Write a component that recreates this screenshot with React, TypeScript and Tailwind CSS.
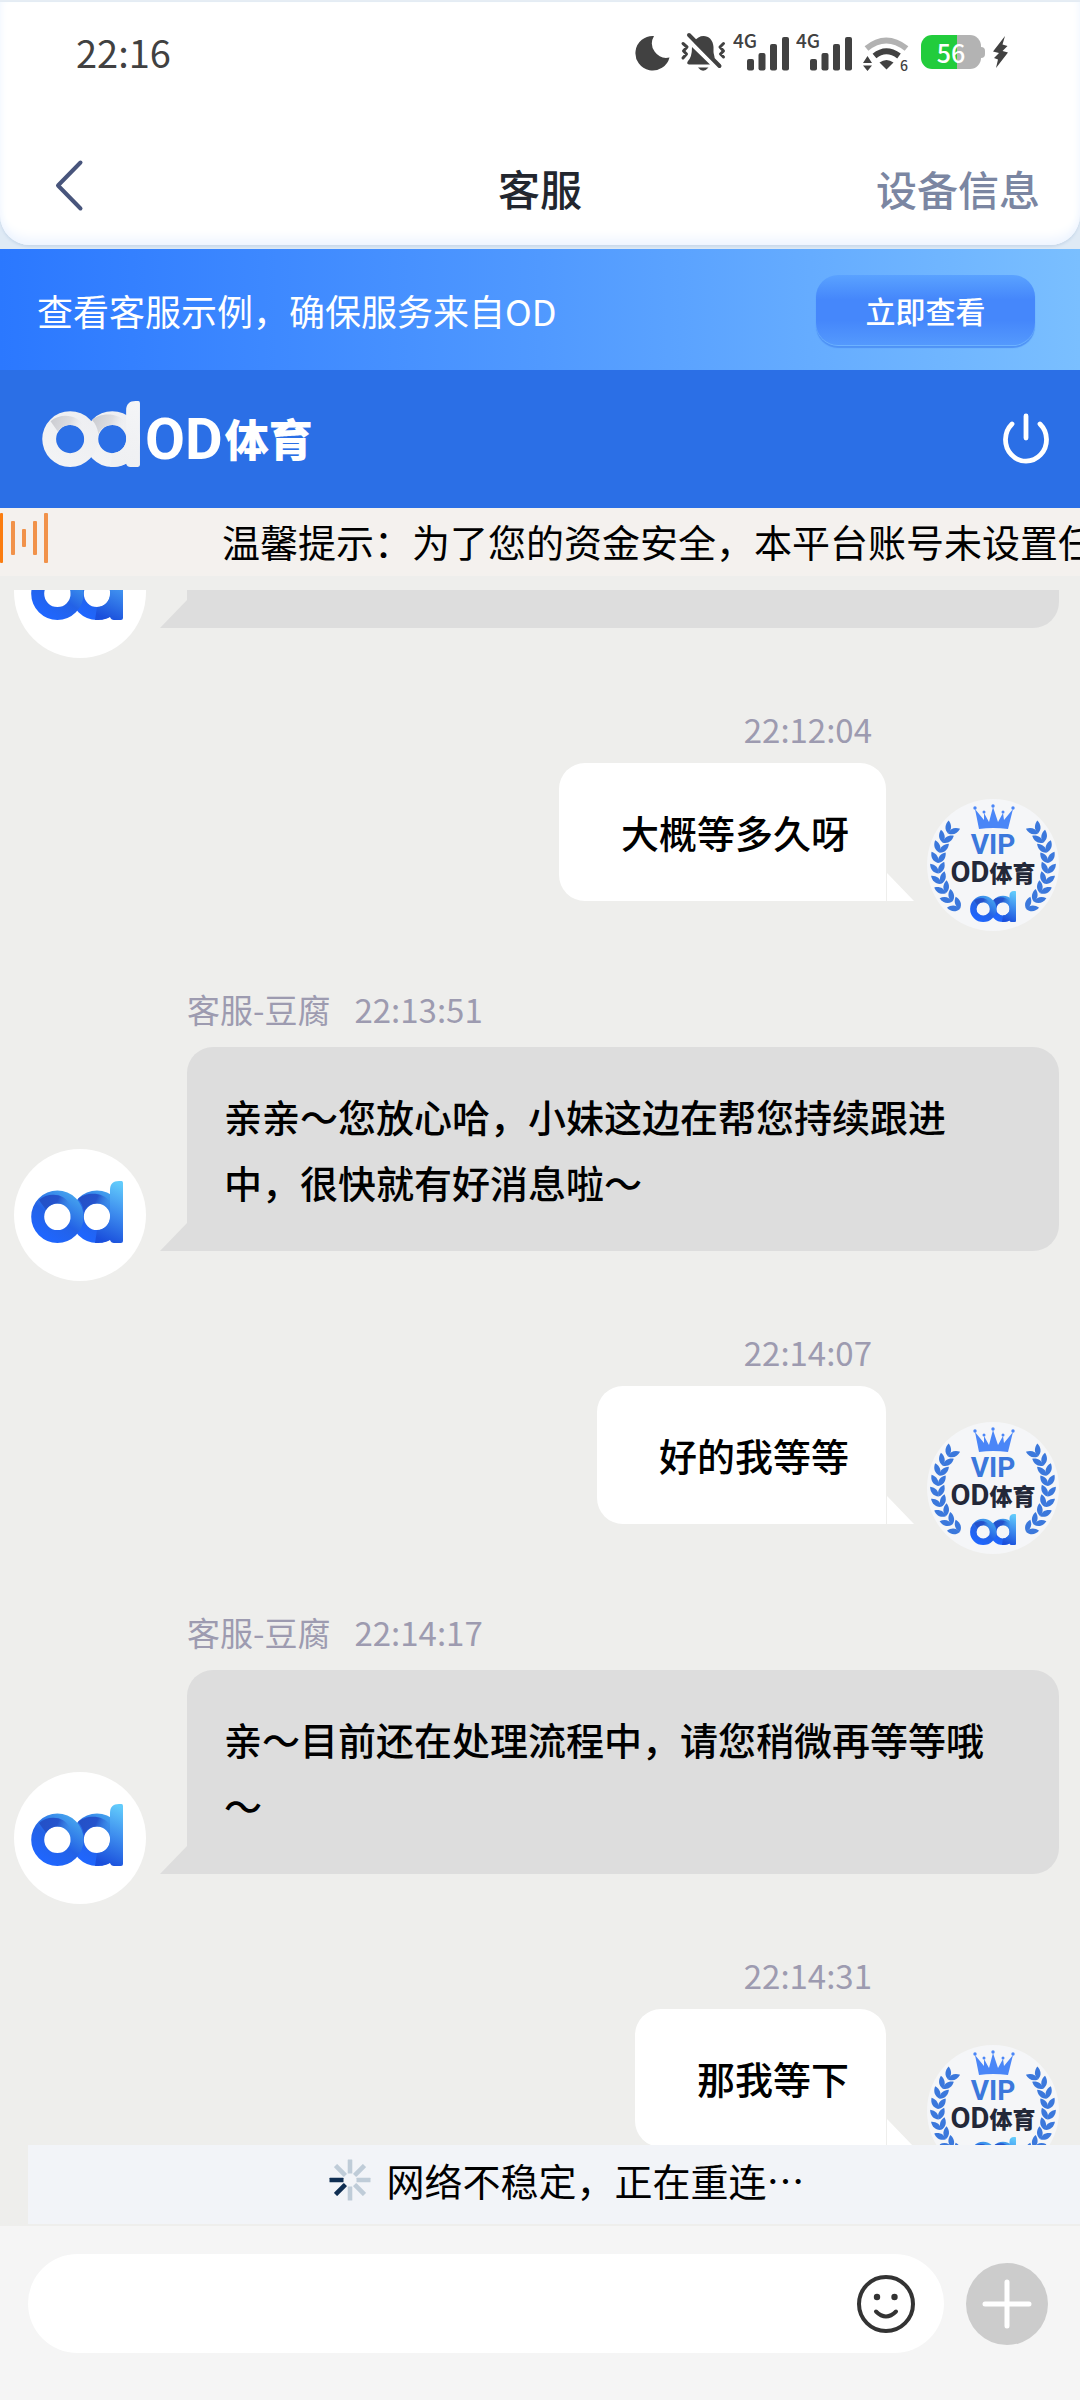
import React from 'react';

const FONT = "font-['Noto_Sans_CJK_SC',sans-serif]";

type LogoTone = 'blue' | 'white';

function OdLogo({ tone, className }: { tone: LogoTone; className: string }) {
  const blue = tone === 'blue';
  const id = React.useId();
  return (
    <svg viewBox="0 0 92 62" className={className} aria-hidden="true">
      <defs>
        <linearGradient id={id + 'a'} x1="0.3" y1="0.95" x2="0.85" y2="0.1">
          <stop offset="0" stopColor={blue ? '#1f66ff' : '#f2f3f5'} />
          <stop offset="0.45" stopColor={blue ? '#2362e6' : '#f0f1f3'} />
          <stop offset="1" stopColor={blue ? '#46a4ee' : '#eeeff2'} />
        </linearGradient>
        <linearGradient id={id + 'b'} x1="0" y1="0" x2="1" y2="0.3">
          <stop offset="0" stopColor={blue ? '#2350c6' : '#c9cacf'} />
          <stop offset="0.6" stopColor={blue ? '#2553cc' : '#dcdde1'} />
          <stop offset="1" stopColor={blue ? '#3a86e4' : '#f0f1f3'} stopOpacity="0.2" />
        </linearGradient>
        <linearGradient id={id + 'c'} x1="0.7" y1="0" x2="0.5" y2="1">
          <stop offset="0" stopColor={blue ? '#62cbfb' : '#f4f5f7'} />
          <stop offset="0.5" stopColor={blue ? '#3d8cee' : '#f1f2f4'} />
          <stop offset="1" stopColor={blue ? '#1a4fdc' : '#eff0f2'} />
        </linearGradient>
      </defs>
      <path
        fillRule="evenodd"
        fill={'url(#' + id + 'a)'}
        d="M66 9.6a26.2 26.2 0 1 0 0 52.4a26.2 26.2 0 0 0 0-52.4ZM66 22.6a13.2 13.2 0 1 1 0 26.4a13.2 13.2 0 0 1 0-26.4Z"
      />
      <path fill={'url(#' + id + 'b)'} d="M47 18C54 11 72 10 79 21V33C78 26 72 22.6 66 22.6C60 22.6 55 26 53 31C52 25 50 21 47 18Z" />
      <path
        fill={'url(#' + id + 'c)'}
        d="M79 9C79 3 82 0 88 0H90.5Q92 0 92 2V60Q92 62 90 62H83Q80 62 79 59C74 62 68 62 64 62L66 49C73 49 79 43 79 36Z"
      />
      <path
        fillRule="evenodd"
        fill={'url(#' + id + 'a)'}
        d="M26.4 9.6a26.2 26.2 0 1 0 0 52.4a26.2 26.2 0 0 0 0-52.4ZM26.4 22.6a13.2 13.2 0 1 1 0 26.4a13.2 13.2 0 0 1 0-26.4Z"
      />
      <path fill={'url(#' + id + 'b)'} d="M8 19C17 11 34 12 39 24L40 36C39 27 33 22.6 26.4 22.6C22 22.6 17 25 15 29C13 26 10 22 8 19Z" />
    </svg>
  );
}

const LEAF_STEPS = [55, 66, 77, 88, 99, 110, 121, 132, 143];

function Laurel() {
  return (
    <g fill="#3b78dc">
      {LEAF_STEPS.map((deg) => {
        const rad = (deg * Math.PI) / 180;
        const x = -55 * Math.sin(rad);
        const y = -55 * Math.cos(rad);
        return (
          <g key={deg} transform={`translate(${x} ${y}) rotate(${90 - deg})`}>
            <path transform="rotate(-32)" d="M0 0C-4-4-3.500-9 0-13C3.500-9 4-4 0 0Z" />
            <path transform="rotate(34)" d="M0 0C-4-4-3.500-9 0-13C3.500-9 4-4 0 0Z" />
          </g>
        );
      })}
    </g>
  );
}

function VipAvatar() {
  return (
    <div className="relative mb-[-30px] size-[132px] shrink-0 rounded-full bg-[#f5f6f8]">
      <svg viewBox="-66 -66 132 132" className="absolute inset-0 size-full" aria-hidden="true">
        <Laurel />
        <g transform="scale(-1 1)">
          <Laurel />
        </g>
        <g fill="#4a86f7">
          <path d="M-14-36L-18-56L-9-45L-9-52L-4-43L0-58L5-43L10-52L11-45L20-56L15-36Q0-38-14-36Z" />
          <circle cx="-18" cy="-57" r="1.7" />
          <circle cx="-9" cy="-53" r="1.5" />
          <circle cx="0" cy="-59" r="1.7" />
          <circle cx="10" cy="-53" r="1.5" />
          <circle cx="20" cy="-57" r="1.7" />
        </g>
      </svg>
      <div className="relative flex flex-col items-center pt-[32px]">
        <span className="font-['Roboto',sans-serif] text-[28px] leading-[28px] font-bold text-[#3b78dc]">VIP</span>
        <span className="flex items-center leading-[26px] text-[#232838]">
          <span className="font-['Roboto',sans-serif] text-[29px] font-bold">OD</span>
          <span className="text-[23px] font-black">体育</span>
        </span>
        <OdLogo tone="blue" className="mt-[6px] h-[31px] w-[46px]" />
      </div>
    </div>
  );
}

function AgentAvatar() {
  return (
    <div className="mb-[-30px] flex size-[132px] shrink-0 items-center justify-center rounded-full bg-white">
      <OdLogo tone="blue" className="mr-[6px] mb-[6px] h-[62px] w-[92px]" />
    </div>
  );
}

function AgentBubble({ children }: { children?: React.ReactNode }) {
  return (
    <div className="flex items-end pr-[21px] pl-[14px]">
      <AgentAvatar />
      <svg viewBox="0 0 27 28" className="ml-[14px] h-[28px] w-[27px] shrink-0" aria-hidden="true">
        <path d="M27 0V28H0Z" fill="#dddddd" />
      </svg>
      <div className="min-h-[138px] flex-1 rounded-[26px] rounded-bl-none bg-[#dddddd] py-[36px] pr-[61px] pl-[37px] text-[38px] leading-[66px] font-medium text-black">
        {children}
      </div>
    </div>
  );
}

function AgentMessage({ time, text }: { time: string; text: string }) {
  return (
    <article className="mt-[54px] pb-[30px]">
      <div className="mb-[14px] flex gap-6 pl-[187px] text-[33px] leading-[48px] text-[#9d9bb0]">
        <span>客服-豆腐</span>
        <time>{time}</time>
      </div>
      <AgentBubble>{text}</AgentBubble>
    </article>
  );
}

function UserMessage({ time, text }: { time: string; text: string }) {
  return (
    <article className="mt-[47px] flex flex-col items-end pr-[21px] pb-[30px]">
      <time className="mr-[187px] mb-[10px] text-[33px] leading-[48px] text-[#9d9bb0]">{time}</time>
      <div className="flex items-end">
        <div className="rounded-[26px] rounded-br-none bg-white py-[36px] pr-[37px] pl-[62px] text-[38px] leading-[66px] font-medium text-black">
          {text}
        </div>
        <svg viewBox="0 0 27 28" className="mr-[13px] ml-px h-[28px] w-[27px]" aria-hidden="true">
          <path d="M0 0V28H27Z" fill="#ffffff" />
        </svg>
        <VipAvatar />
      </div>
    </article>
  );
}

function Signal() {
  return (
    <svg viewBox="733 20 57 60" className="h-[60px] w-[57px]" fill="#414141" aria-label="4G">
      <text x="733" y="46" fontSize="19" fontWeight="500" fontFamily="Noto Sans CJK SC">4G</text>
      <rect x="747" y="57" width="7" height="11.5" rx="2" />
      <rect x="758.5" y="51" width="7" height="17.5" rx="2" />
      <rect x="770" y="42" width="7" height="26.5" rx="2" />
      <rect x="782" y="35" width="7" height="33.5" rx="2" />
    </svg>
  );
}

function StatusBar() {
  return (
    <div className="flex h-[100px] items-center justify-between pr-[72px] pl-[76px]">
      <span className="text-[38px] leading-[40px] text-[#414141]">22:16</span>
      <div className="flex items-center">
        <svg viewBox="636 30 36 40" className="h-[40px] w-[36px]" aria-hidden="true">
          <path d="M655 34A17.3 17.3 0 1 0 670.5 55.5A14.5 14.5 0 0 1 655 34Z" fill="#414141" />
        </svg>
        <svg viewBox="681 30 46 40" className="ml-[9px] h-[40px] w-[46px]" aria-hidden="true">
          <path d="M695 40C701 30 714 33 714.5 45V50C715 55 718 58 711 56.5L695 40.5Z" fill="#414141" />
          <path d="M693 45L711 62.5H690Q687 62 689 59Q693 55 693 45Z" fill="#414141" />
          <path d="M699 65.5H709.5Q704 72 699 65.5Z" fill="#414141" />
          <path d="M690 33L720.5 64" stroke="#414141" strokeWidth="4" strokeLinecap="round" />
          <path d="M684 41.5L688 45L684.5 49L687.5 52L684 56M724.5 41.5L721 45L724.5 49L721.5 52L724.5 55" stroke="#414141" strokeWidth="3" fill="none" strokeLinecap="round" strokeLinejoin="round" />
        </svg>
        <div className="ml-[7px] flex gap-[6px]">
          <Signal />
          <Signal />
        </div>
        <svg viewBox="862 20 48 60" className="ml-[9px] h-[60px] w-[48px]" aria-hidden="true">
          <path d="M866.5 46.5Q886 30.5 906.5 46.5" stroke="#b2b2b2" strokeWidth="6" fill="none" />
          <path d="M874.5 54Q886 44.5 899 54" stroke="#414141" strokeWidth="6" fill="none" />
          <path d="M886.5 67.5L879.5 60.5Q886.5 55.5 893.5 60.5Z" fill="#414141" />
          <path d="M863 61L867.5 54L872 61ZM863 63.5H872L867.5 69Z" fill="#414141" />
          <text x="900" y="69" fontSize="14" fontWeight="500" fill="#414141" fontFamily="Noto Sans CJK SC">6</text>
        </svg>
        <div className="ml-[11px] flex h-[34px] w-[60px] items-center justify-center rounded-[11px] bg-[linear-gradient(90deg,#22cc3c_60%,#b3b3b3_60%)] text-[25px] leading-[34px] font-medium text-white">
          56
        </div>
        <div className="h-[11px] w-[4px] rounded-r-[4px] bg-[#b3b3b3]" />
        <svg viewBox="991 34 16 36" className="ml-[7px] h-[36px] w-[16px]" aria-hidden="true">
          <path d="M1004 36L992 51.5L998 53L993 58L997 59.5L995 68L1007 52.5L1001.5 51L1006.5 46L1001.5 44.5Z" fill="#414141" />
        </svg>
      </div>
    </div>
  );
}

const SPOKES = [0, 45, 90, 135, 180, 225, 270, 315];

function Spinner() {
  return (
    <svg viewBox="-21 -21 42 42" className="size-[42px]" aria-hidden="true">
      {SPOKES.map((deg) => (
        <rect
          key={deg}
          x="-2.3"
          y="-20.5"
          width="4.6"
          height="14"
          rx="0.5"
          transform={`rotate(${deg})`}
          fill={deg === 225 || deg === 270 ? '#0f2e52' : '#bfccd8'}
        />
      ))}
    </svg>
  );
}

const WAVE = [
  { x: 0, y: 0, h: 50, w: 3, c: '#fb7d10' },
  { x: 11, y: 8, h: 34, w: 4, c: '#f1924a' },
  { x: 22, y: 16, h: 18, w: 4, c: '#f1924a' },
  { x: 33, y: 8, h: 34, w: 4, c: '#f1924a' },
  { x: 44, y: 0, h: 50, w: 4, c: '#f1924a' },
];

export default function App() {
  return (
    <div className={`${FONT} flex min-h-screen flex-col overflow-x-hidden bg-[#eeeeec]`} lang="zh-CN">
      <div className="border-t-2 border-[#e6edf4] bg-[#dfeaf5] pb-[4px]">
        <header className="rounded-b-[30px] bg-white pb-[18px] shadow-[inset_0_-14px_12px_-8px_#edf4ff,inset_6px_0_8px_-6px_#edf4ff,inset_-6px_0_8px_-6px_#edf4ff,0_2px_3px_#c8d8ea]">
          <StatusBar />
          <nav className="mt-[46px] grid h-[79px] grid-cols-[1fr_auto_1fr] items-center px-[40px]">
            <button type="button" aria-label="返回" className="ml-[15px] justify-self-start">
              <svg viewBox="55 160 30 53" className="mb-[4px] h-[53px] w-[30px]" aria-hidden="true">
                <path d="M80.5 163.5L58 186.5L80.5 209.5" fill="none" stroke="#48557c" strokeWidth="4" strokeLinecap="round" strokeLinejoin="round" />
              </svg>
            </button>
            <h1 className="text-[42px] leading-[60px] font-medium text-[#22262e]">客服</h1>
            <button type="button" className="justify-self-end text-[41px] leading-[60px] font-medium text-[#7b86a2]">设备信息</button>
          </nav>
        </header>
      </div>

      <section className="flex h-[121px] items-center justify-between bg-[linear-gradient(90deg,#2b78ff,#5099ff_50%,#7abfff)] pr-[45px] pl-[37px]">
        <p className="text-[36px] leading-[50px] text-white">查看客服示例，确保服务来自OD</p>
        <button
          type="button"
          className="h-[70px] w-[219px] rounded-[22px] bg-[linear-gradient(180deg,#5aa2ff,#4587fb_35%,#4587fb_65%,#5499fd)] text-[30px] leading-[70px] font-medium text-white shadow-[0_1px_0_#6cb2ff,0_3px_1px_#4e92f6]"
        >
          立即查看
        </button>
      </section>

      <section className="flex h-[138px] items-center justify-between bg-[#2b6fe6] pr-[29px] pl-[42px]">
        <div className="flex items-center text-white">
          <OdLogo tone="white" className="mb-[10px] h-[66px] w-[98px]" />
          <span className="ml-[5px] font-['Roboto',sans-serif] text-[58px] leading-[60px] font-bold">OD</span>
          <span className="mb-[2px] ml-[2px] text-[44px] leading-[60px] font-black">体育</span>
        </div>
        <button type="button" aria-label="退出">
          <svg viewBox="0 0 50 54" className="h-[54px] w-[50px]" fill="none" stroke="#fff" strokeWidth="4.8" strokeLinecap="round" aria-hidden="true">
            <path d="M11 12A20.5 21.5 0 1 0 39 12M25 4V26" />
          </svg>
        </button>
      </section>

      <section className="flex h-[68px] items-center overflow-hidden bg-[#f4f1ee]">
        <svg viewBox="0 0 48 50" className="mb-[8px] h-[50px] w-[48px] shrink-0" aria-hidden="true">
          {WAVE.map((b) => (
            <rect key={b.x} x={b.x} y={b.y} width={b.w} height={b.h} rx="1" fill={b.c} />
          ))}
        </svg>
        <p className="mb-[2px] ml-[174px] text-[38px] leading-[56px] whitespace-nowrap text-black">
          温馨提示：为了您的资金安全，本平台账号未设置任何
        </p>
      </section>

      <main className="relative mt-[14px] flex-1">
        <div className="flex h-[68px] flex-col justify-end overflow-hidden">
          <div className="pb-[30px]">
            <AgentBubble />
          </div>
        </div>
        <div>
          <UserMessage time="22:12:04" text="大概等多久呀" />
          <AgentMessage time="22:13:51" text="亲亲～您放心哈，小妹这边在帮您持续跟进中，很快就有好消息啦～" />
          <UserMessage time="22:14:07" text="好的我等等" />
          <AgentMessage time="22:14:17" text="亲～目前还在处理流程中，请您稍微再等等哦～" />
          <UserMessage time="22:14:31" text="那我等下" />
        </div>
        <div role="status" className="absolute right-0 bottom-[2px] left-[28px] flex h-[79px] items-center justify-center gap-[15px] bg-[#f2f4f8] pb-[9px] pl-[26px] text-[38px] leading-[60px] text-black">
          <Spinner />
          <span>网络不稳定，正在重连…</span>
        </div>
      </main>

      <form className="flex items-center bg-[#f5f5f5] pt-[28px] pr-[32px] pb-[47px] pl-[28px]" onSubmit={(e) => e.preventDefault()}>
        <div className="flex h-[99px] flex-1 items-center rounded-full bg-white pr-[28px] pl-[36px]">
          <input type="text" aria-label="输入消息" className="h-full min-w-0 flex-1 bg-transparent text-[38px] outline-none" />
          <button type="button" aria-label="表情">
            <svg viewBox="0 0 60 60" className="size-[60px]" aria-hidden="true">
              <circle cx="30" cy="30" r="27" fill="none" stroke="#333" strokeWidth="4" />
              <circle cx="21" cy="23" r="3.2" fill="#333" />
              <circle cx="38.5" cy="23" r="3.2" fill="#333" />
              <path d="M20 37.5Q30 47.5 40 37.5" fill="none" stroke="#333" strokeWidth="4" strokeLinecap="round" />
            </svg>
          </button>
        </div>
        <button type="button" aria-label="更多" className="ml-[22px] flex size-[82px] items-center justify-center rounded-full bg-[#cccccc]">
          <svg viewBox="0 0 50 50" className="size-[50px]" stroke="#fff" strokeWidth="5" strokeLinecap="round" aria-hidden="true">
            <path d="M25 3V47M3 25H47" />
          </svg>
        </button>
      </form>
    </div>
  );
}
